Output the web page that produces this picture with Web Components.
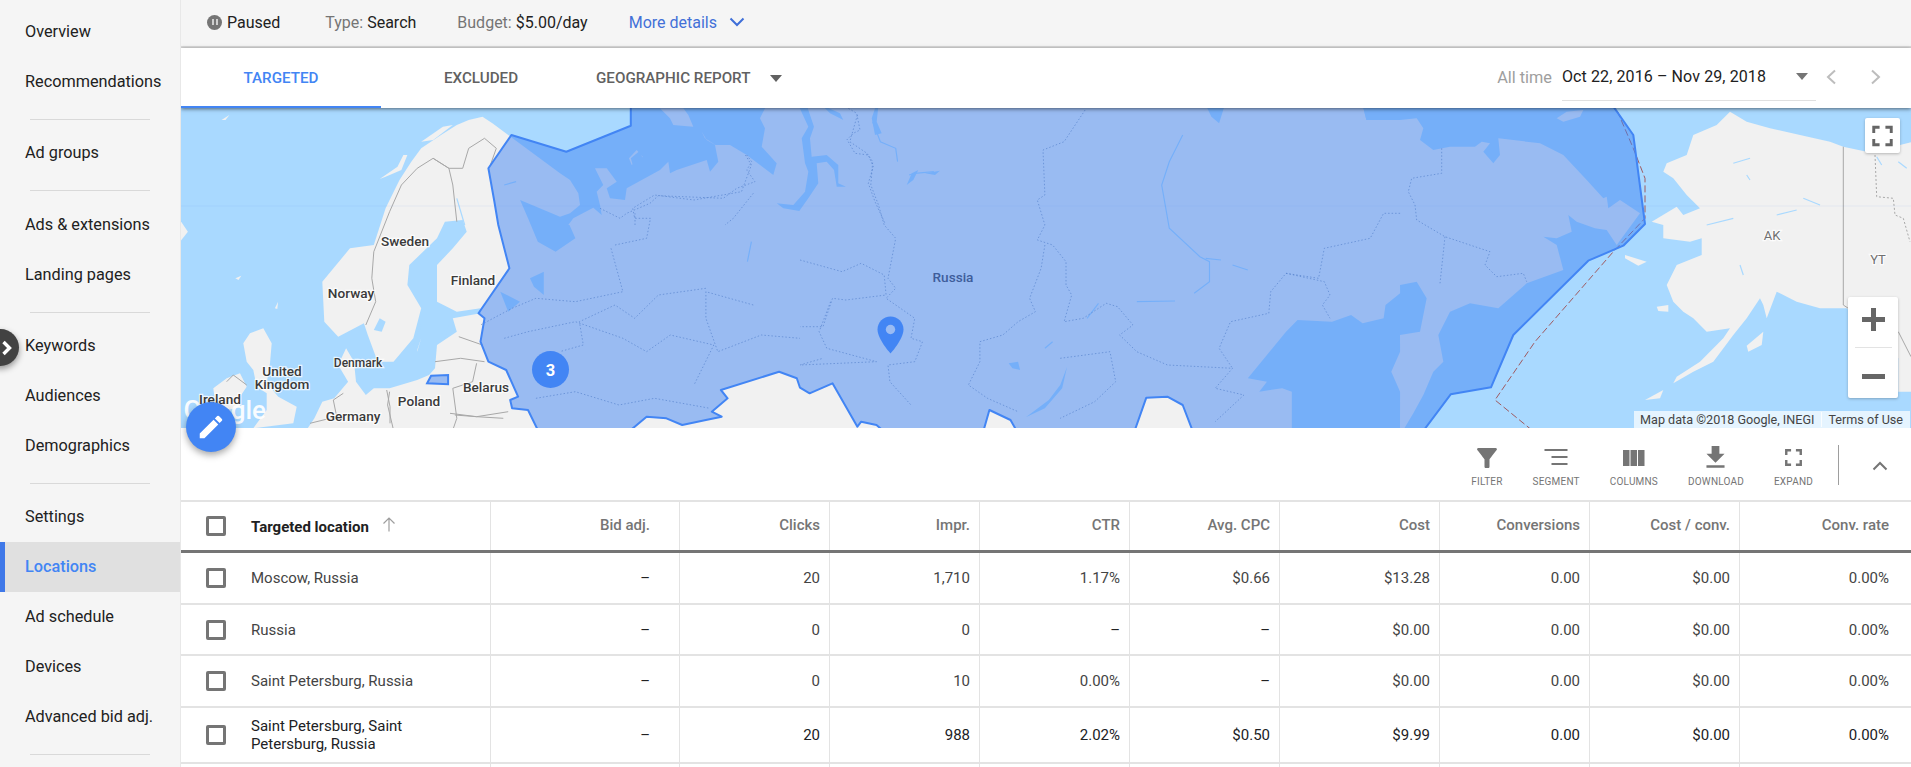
<!DOCTYPE html>
<html>
<head>
<meta charset="utf-8">
<title>Locations</title>
<style>
	html, body { margin: 0; height: 767px; overflow: hidden; background: #fff; }
	body { display: flex; font-family: Roboto, "Liberation Sans", sans-serif; color: #212121; }
</style>
</head>
<body>
<side-nav>
	<nav-item>Overview</nav-item>
	<nav-item>Recommendations</nav-item>
	<nav-rule></nav-rule>
	<nav-item>Ad groups</nav-item>
	<nav-rule></nav-rule>
	<nav-item>Ads &amp; extensions</nav-item>
	<nav-item>Landing pages</nav-item>
	<nav-rule></nav-rule>
	<nav-item>Keywords</nav-item>
	<nav-item>Audiences</nav-item>
	<nav-item>Demographics</nav-item>
	<nav-rule></nav-rule>
	<nav-item>Settings</nav-item>
	<nav-item active>Locations</nav-item>
	<nav-item>Ad schedule</nav-item>
	<nav-item>Devices</nav-item>
	<nav-item>Advanced bid adj.</nav-item>
	<nav-rule></nav-rule>
</side-nav>
<main-pane>
	<status-bar></status-bar>
	<tab-bar>
		<tab-item active>Targeted</tab-item>
		<tab-item>Excluded</tab-item>
		<tab-menu>Geographic report</tab-menu>
		<date-range slot="end"></date-range>
	</tab-bar>
	<geo-map></geo-map>
	<table-toolbar>
		<tool-button label="Filter" icon="filter"></tool-button>
		<tool-button label="Segment" icon="segment"></tool-button>
		<tool-button label="Columns" icon="columns"></tool-button>
		<tool-button label="Download" icon="download"></tool-button>
		<tool-button label="Expand" icon="expand"></tool-button>
	</table-toolbar>
	<data-table></data-table>
	<edit-fab></edit-fab>
</main-pane>
<script>
customElements.define('side-nav', class extends HTMLElement
{
	connectedCallback()
	{
		this.attachShadow({ mode: 'open' }).innerHTML = `
			<style>
				:host { display: block; position: relative; flex: 0 0 181px; width: 181px; height: 767px; padding-top: 7px; box-sizing: border-box; background: #f5f5f5; border-right: 1px solid #e8e8e8; overflow: hidden; }
				.toggle { position: absolute; left: -18px; top: 329px; width: 37px; height: 37px; border-radius: 50%; background: #424242; box-shadow: 0 3px 6px rgba(0,0,0,.4); display: flex; align-items: center; justify-content: flex-end; }
				svg { margin-right: 6px; }
			</style>
			<slot></slot>
			<div class="toggle"><svg width="12" height="16" viewBox="0 0 12 16"><path d="M2.5 2l6 6-6 6" fill="none" stroke="#fff" stroke-width="3.4"/></svg></div>
		`;
	}
});

customElements.define('nav-item', class extends HTMLElement
{
	connectedCallback()
	{
		this.attachShadow({ mode: 'open' }).innerHTML = `
			<style>
				:host { display: block; height: 50px; line-height: 50px; padding-left: 25px; font-size: 16.25px; color: #212121; white-space: nowrap; }
				:host([active]) { padding-left: 20px; border-left: 5px solid #3f78e8; background: #e0e0e0; color: #4285f4; font-weight: 500; }
			</style>
			<slot></slot>
		`;
	}
});

customElements.define('nav-rule', class extends HTMLElement
{
	connectedCallback()
	{
		this.attachShadow({ mode: 'open' }).innerHTML = `
			<style>
				:host { display: block; height: 1px; margin: 12px 30px 8.3px; background: #d9d9d9; }
			</style>
		`;
	}
});

customElements.define('main-pane', class extends HTMLElement
{
	connectedCallback()
	{
		this.attachShadow({ mode: 'open' }).innerHTML = `
			<style>
				:host { display: flex; flex-direction: column; position: relative; flex: 1; min-width: 0; height: 767px; overflow: hidden; }
			</style>
			<slot></slot>
		`;
	}
});

customElements.define('status-bar', class extends HTMLElement
{
	connectedCallback()
	{
		this.attachShadow({ mode: 'open' }).innerHTML = `
			<style>
				:host { display: flex; align-items: center; flex: 0 0 48px; height: 48px; padding: 0 0 2px 26px; box-sizing: border-box; background: #f5f5f5; border-bottom: 2px solid #dcdcdc; font-size: 16px; color: #212121; white-space: nowrap; }
				.dot { width: 15px; height: 15px; border-radius: 50%; background: #757575; display: flex; align-items: center; justify-content: center; gap: 2px; margin-right: 5px; }
				.dot i { width: 2px; height: 6px; background: #cfcfcf; }
				.muted { color: #757575; }
				.type { margin-left: 45px; }
				.budget { margin-left: 41px; }
				.more { margin-left: 41px; color: #4270d8; }
				svg { margin-left: 12px; }
			</style>
			<span class="dot"><i></i><i></i></span><span>Paused</span>
			<span class="type"><span class="muted">Type:</span> Search</span>
			<span class="budget"><span class="muted">Budget:</span> $5.00/day</span>
			<span class="more">More details</span>
			<svg width="16" height="10" viewBox="0 0 16 10"><path d="M1.5 1.5L8 8l6.500-6.500" fill="none" stroke="#3f6fd8" stroke-width="2"/></svg>
		`;
	}
});

customElements.define('tab-bar', class extends HTMLElement
{
	connectedCallback()
	{
		this.attachShadow({ mode: 'open' }).innerHTML = `
			<style>
				:host { display: flex; position: relative; z-index: 2; flex: 0 0 60px; height: 60px; background: #fff; box-shadow: 0 1px 4px rgba(0,0,0,.55); }
				.end { margin-left: auto; display: flex; }
			</style>
			<slot></slot>
			<div class="end"><slot name="end"></slot></div>
		`;
	}
});

customElements.define('tab-item', class extends HTMLElement
{
	connectedCallback()
	{
		this.attachShadow({ mode: 'open' }).innerHTML = `
			<style>
				:host { display: flex; align-items: center; justify-content: center; width: 200px; height: 60px; padding-top: 2px; box-sizing: border-box; border-bottom: 2px solid transparent; font-size: 15.2px; font-weight: 500; text-transform: uppercase; color: #616161; }
				:host([active]) { color: #4285f4; border-bottom-color: #4285f4; }
			</style>
			<slot></slot>
		`;
	}
});

customElements.define('tab-menu', class extends HTMLElement
{
	connectedCallback()
	{
		this.attachShadow({ mode: 'open' }).innerHTML = `
			<style>
				:host { display: flex; align-items: center; height: 60px; padding-left: 15px; box-sizing: border-box; font-size: 15.2px; font-weight: 500; text-transform: uppercase; color: #616161; }
				i { margin-left: 20px; border: 6px solid transparent; border-top: 7px solid #616161; border-bottom: 0; }
			</style>
			<slot></slot><i></i>
		`;
	}
});

customElements.define('date-range', class extends HTMLElement
{
	connectedCallback()
	{
		this.attachShadow({ mode: 'open' }).innerHTML = `
			<style>
				:host { display: flex; align-items: center; height: 58px; padding-right: 30px; font-size: 16px; white-space: nowrap; }
				.label { color: #9e9e9e; margin-right: 10px; font-size: 16.3px; }
				.box { display: flex; align-items: center; justify-content: space-between; width: 254px; height: 38px; margin-top: 10px; padding-bottom: 10px; box-sizing: border-box; border-bottom: 1px solid #e0e0e0; letter-spacing: .1px; color: #212121; }
				.box i { margin-right: 8px; border: 6.500px solid transparent; border-top: 7px solid #757575; border-bottom: 0; }
				svg { margin-left: 10px; }
				svg + svg { margin-left: 35px; }
			</style>
			<span class="label">All time</span>
			<div class="box"><span>Oct 22, 2016 – Nov 29, 2018</span><i></i></div>
			<svg width="10" height="16" viewBox="0 0 10 16"><path d="M9 1.500L2 8l7 6.500" fill="none" stroke="#bdbdbd" stroke-width="2"/></svg>
			<svg width="10" height="16" viewBox="0 0 10 16"><path d="M1 1.500L8 8l-7 6.500" fill="none" stroke="#bdbdbd" stroke-width="2"/></svg>
		`;
	}
});

// coordinates below are read from crops of the map, each with its own origin and x scale
const mapFrames = { a: [180, 2.529], b: [800, 2.613], c: [1400, 3], d: [560, 3], e: [0, 3, 300] };

function mapPoints(source)
{
	return source.trim().split(/\s*\|\s*/).map(part =>
	{
		const [key, ...pairs] = part.trim().split(/\s+/);
		const [left, scale, top = 105] = mapFrames[key];

		return pairs.map(pair =>
		{
			const [x, y] = pair.split(',').map(Number);
			return `${(left + x / scale).toFixed(1)},${(top + y / 3).toFixed(1)}`;
		}).join(' ');
	}).join(' ');
}

const landShapes = [
	// Eurasia, clockwise from the North Cape
	`a 700,60 730,45 765,35 790,55 830,90 | d 0,205 30,225 55,265 60,300 30,325 0,335 | a 940,325 860,285 880,340 905,410 950,440 1000,400 985,360 | d 25,360 40,340 100,308 125,330 120,300 110,260 130,240 105,190 140,190 170,230 140,250 150,280 195,285 200,250 300,195 325,170 330,205 350,195 440,165 450,200 475,170 465,120 510,120 560,150 640,210 650,175 605,125 615,70 600,40 620,0 |
	 b 1470,0 1480,45 1568,45 | c 50,40 70,70 60,105 100,135 150,125 225,125 245,110 270,115 250,140 280,175 300,150 295,100 420,115 490,150 560,225 610,280 620,275 625,310 660,285 720,325 650,420 620,375 585,370 530,350 505,330 515,380 470,400 430,395 470,420 490,495 380,535 295,610 210,595 150,620 115,690 130,770 100,800 70,870 40,925 10,975 0,975 |
	 b 1568,860 1545,800 1568,740 | c 0,690 60,680 80,580 50,530 0,540 | b 1568,565 1530,600 1525,640 1470,655 1440,630 1390,650 1300,645 1270,680 1220,750 1170,820 1220,830 1200,860 1260,850 1285,860 1285,975 |
	 a 320,975 340,940 360,890 390,880 425,830 400,780 420,730 440,770 445,830 470,870 490,850 530,850 600,825 630,810 645,790 650,720 700,680 690,640 760,625 760,610 700,620 650,590 650,480 690,430 725,380 715,345 670,350 650,400 580,480 575,540 610,610 590,700 540,770 500,770 475,690 465,655 400,695 365,650 360,530 430,430 490,420 520,310 555,225 585,170 610,130 660,90`,
	// Alaska and Canada
	`c 990,20 1040,50 1110,70 1200,90 1290,110 1330,125 1400,140 1500,120 1540,110 1540,860 1495,860 1495,760 1400,660 1340,610 1260,610 1190,590 1130,560 1100,640 1090,600 1080,580 1040,640 1000,690 940,770 880,800 820,835 830,815 900,770 970,700 990,670 920,680 880,640 850,620 820,590 800,540 830,480 905,450 905,400 870,410 790,400 790,360 755,350 830,305 850,330 900,310 860,270 820,220 790,200 800,175 860,150 880,90 950,60`,
	`c 675,450 740,470 715,482 675,460`,
	`c 1040,722 1090,680 1085,720 1045,740`,
	`c 770,605 805,600 805,620 775,618`,
	`c 735,885 790,855 780,880`,
	`e 790,85 815,130 810,190 800,250 835,290 890,320 880,370 760,385 800,330 800,280 770,260 760,210 740,185 730,130 750,100`,
	`e 680,235 720,220 740,260 720,290 720,320 650,340 640,265`,
	`a 0,345 20,380 0,410`,
	`a 505,222 550,185 565,150 575,150 560,195 520,215`,
	`a 610,110 665,65 690,60 640,105`,
	`a 105,45 125,30 115,45`,
	`a 140,520 155,512 148,525`,
	`a 240,610 248,590 246,612`,
	`d 300,10 330,40 340,60 400,65 385,30 370,10`,
	`d 425,80 435,100 470,122 440,105`,
	`d 207,160 230,135 248,155 215,180`,
	`c 470,40 500,20 550,15 540,35 490,50`,
	`a 600,735 610,700 600,740`
];

const waterShapes = [
	// Gulf of Ob and the Yenisei mouth
	`d 715,0 740,0 762,65 750,100 755,155 800,150 835,180 835,235 858,245 830,245 822,195 800,170 770,175 775,235 745,280 718,318 670,310 650,295 700,300 735,260 745,200 735,175 725,100 745,65`,
	`d 785,0 840,25 850,45 810,25`,
	`d 935,40 945,10 955,5 950,50 965,85 945,90`,
	`d 1040,240 1055,205 1075,195 1060,225`,
	`d 1095,205 1140,197 1125,210`,
	`b 1060,0 1110,0 1095,55 1075,35`,
	`b 1480,45 1568,20 1568,0 1470,0`,
	// lakes
	`a 1140,160 1165,135 1170,165 1145,180`,
	`a 885,520 920,500 920,570 895,545`,
	`a 810,560 860,590 830,620`,
	`a 505,640 520,650 510,680 490,675`,
	`a 660,690 680,660 670,700`,
	// Baikal
	`b 698,785 685,850 640,910 590,937 650,885 680,840`,
	`b 545,775 570,770 575,795 555,790`
];

const riverLines = [
	`b 1000,90 965,170 945,240 965,370 1045,455 1070,470 1070,530 1030,565`,
	`b 190,50 210,110 250,130 255,170`, `b 285,210 300,205 350,200`, `b 880,590 980,588`,
	`b 780,595 750,640`, `b 1060,460 1100,465`, `b 1130,480 1170,495`, `b 660,710 640,730`,
	`a 700,280 720,360`, `a 820,240 850,230`, `a 610,660 590,720`, `a 1445,410 1435,470`,
	`c 1000,175 1050,160`, `c 920,360 1000,340`, `c 1130,330 1190,315`, `c 1210,280 1260,300`,
	`c 1040,210 1050,225`, `c 1430,155 1445,180`, `c 1495,170 1520,190`, `c 1020,480 1030,510`
];

const dottedLines = [
	`d 120,310 180,340 200,325 270,295 295,272 490,280 530,250 585,230 560,195 575,170 560,150`,
	`d 225,360 225,325`, `d 860,105 880,85 900,75 890,25 865,10`,
	`d 865,110 885,145 925,150 940,185 925,235 945,290 975,355`,
	`d 580,265 520,340 495,360`,
	`a 1100,420 1180,400 1190,340 1150,340 1145,310 1200,270 1300,285 1420,260 1445,180 1430,150`,
	`a 1090,430 1120,560 1000,590 900,580 840,610 760,660`,
	`a 1330,550 1210,570 1150,640 1100,600 1010,650 1020,720 960,740`,
	`a 1450,600 1330,560 1330,640 1360,740 1470,690 1568,700`,
	`a 820,700 880,680 1000,650 | a 1120,700 1180,740 1240,690 1350,720 1300,840`,
	`a 900,880 1000,860 1110,900 1200,880 1340,910`,
	`b 150,30 130,110 175,145 190,170 185,240 205,300 220,360 250,400 230,520 250,550 225,580 300,640 290,700 320,710 300,770 230,780 235,830 290,900`,
	`b 0,465 110,500 160,475 220,510 225,570 120,585 85,580 60,665 0,665`,
	`b 80,590 50,680 70,730 200,770 | b 0,780 60,760`,
	`b 745,15 690,110 635,135 640,270 620,285 640,360 620,405 660,420 695,470 695,540 710,570 690,650 740,640 800,595 830,605 870,660 835,690 880,740 960,780 1130,790 1085,850 1160,870 1085,950`,
	`b 640,420 630,490 600,580 615,620 570,650 530,690 470,710 470,770 440,840 490,880 570,920`,
	`b 680,760 810,740 825,830 770,890 680,940`,
	`b 1568,325 1525,325 1490,400 1370,430 1355,520 1270,505 1230,560 1225,625 1125,650 1095,730 1130,790`,
	`b 1270,505 1370,530 1385,570 1365,600 1385,640`,
	`c 125,130 125,205 35,220 25,260 45,300 50,345 135,395 270,440 255,480 290,515 370,505 380,530`,
	`c 135,395 120,535`
];

const borderLines = [
	`a 640,160 600,190 560,240 530,320 490,440 485,520 495,590 470,660`,
	`a 640,160 680,190 690,240 700,350`, `a 730,130 770,100 800,130 785,180`, `a 640,160 680,190 715,190 730,130`,
	`a 645,770 710,760 770,770`, `a 705,695 765,720`, `a 750,775 740,830 690,850 700,940 690,975`,
	`a 530,860 525,900 540,975`, `a 695,930 750,935 830,920`, `e 1350,340 1430,350 1510,355`, `e 1160,270 1170,320 1170,370`,
	`e 1030,280 1000,300 1010,350 930,370`,
	`e 680,245 700,225 740,255`,
	`c 1330,125 1330,600 1345,610`,
	`c 1495,680 1533,755`
];

const canadaLines = [`c 1425,150 1430,275 1480,280 1485,330 1510,340 1530,410`];

const mapLabels = [
	['Sweden', 405, 242], ['Finland', 473, 281], ['Norway', 351, 294], ['United', 282, 372], ['Kingdom', 282, 385],
	['Denmark', 358, 364, 'small'], ['Ireland', 220, 400], ['Poland', 419, 402], ['Belarus', 486, 388], ['Germany', 353, 417],
	['Russia', 953, 278, 'russia'], ['AK', 1772, 237, 'state'], ['YT', 1878, 261, 'state']
];

customElements.define('geo-map', class extends HTMLElement
{
	connectedCallback()
	{
		const polys = (list, attrs) => list.map(points => `<polygon points="${mapPoints(points)}" ${attrs}/>`).join('');
		const lines = (list, attrs) => list.map(points => `<polyline points="${mapPoints(points)}" fill="none" ${attrs}/>`).join('');
		const russia = mapPoints(`
			a 1140,-10 1140,62 977,140 838,90 780,190 795,290 805,360 833,490 755,625 770,640 760,710 780,770 825,795 855,875 835,885 840,910 880,915 905,975 1140,975 1180,935 1230,940 1270,960 1330,945 1370,935 1345,920 1385,880 1368,855 1515,800 1560,820 1568,848 |
			b 25,865 85,835 150,965 160,950 200,960 215,975 480,975 495,915 550,945 565,975 875,975 905,878 960,875 1000,900 1025,975 |
			c 72,975 152,868 273,847 340,690 565,467 670,422 735,357 700,90 630,-10`);

		this.attachShadow({ mode: 'open' }).innerHTML = `
			<style>
				:host { display: block; position: relative; flex: 0 0 320px; height: 320px; overflow: hidden; background: #a9d9ff; }
				svg.map { display: block; }
				text { font-family: Roboto, "Liberation Sans", sans-serif; }
				.label { font-size: 13.600px; font-weight: 500; fill: #3a3a3a; text-anchor: middle; dominant-baseline: middle; paint-order: stroke; stroke: rgba(255,255,255,.75); stroke-width: 2.500px; }
				.small { font-size: 12px; }
				.russia { fill: #3e5d9b; stroke: none; font-size: 13.600px; }
				.state { fill: #707070; font-weight: 400; font-size: 13px; }
				.google { font-size: 26px; font-weight: 500; fill: #fff; opacity: .92; text-anchor: end; }
				.control { position: absolute; background: #fff; border-radius: 2px; box-shadow: 0 1px 3px rgba(0,0,0,.25); }
				.full { left: 1684px; top: 10px; width: 35px; height: 35px; display: flex; align-items: center; justify-content: center; }
				.zoom { left: 1667px; top: 189px; width: 50px; height: 101px; display: flex; flex-direction: column; align-items: center; }
				.zoom .plus, .zoom .minus { flex: 1; display: flex; align-items: center; justify-content: center; width: 100%; }
				.zoom .plus svg { margin-bottom: 6px; }
				.zoom .minus svg { margin-top: 6px; }
				.zoom hr { width: 37px; height: 1px; margin: 0; border: 0; background: #e3e3e3; }
				.legal { position: absolute; right: 1px; bottom: 0; height: 17px; display: flex; align-items: center; background: rgba(255,255,255,.7); font-size: 12.600px; color: #444; white-space: nowrap; }
				.legal span { padding: 0 7px 0 6px; }
				.legal span + span { border-left: 1px solid rgba(255,255,255,.8); }
			</style>
			<svg class="map" width="1730" height="320" viewBox="181 108 1730 320">
				${polys(landShapes, 'fill="#f1f1f1"')}
				${polys(waterShapes, 'fill="#a9d9ff"')}
				${lines(riverLines, 'stroke="#a9d9ff" stroke-width="1.200"')}
				<polyline points="${mapPoints('c 640,-10 700,130 735,220 735,340 640,440 405,710 285,885 395,975')}" fill="none" stroke="#a05a5f" stroke-width="1" stroke-dasharray="7 3"/>
				${lines(borderLines, 'stroke="#a8a8a8" stroke-width="1"')}
				${lines(canadaLines, 'stroke="#a8a8a8" stroke-width="1" stroke-dasharray="2 2"')}
				${lines(dottedLines, 'stroke="#5f769f" stroke-width=".9" stroke-dasharray="1.500 2" opacity=".7"')}
				<line x1="181" x2="1911" y1="206" y2="206" stroke="#4285f4" stroke-opacity=".07"/>
				<polygon points="${russia}" fill="#4285f4" fill-opacity=".5" stroke="#4285f4" stroke-width="2" stroke-linejoin="round"/>
				<polygon points="${mapPoints('a 625,835 635,812 678,810 678,838')}" fill="#4285f4" fill-opacity=".5" stroke="#4285f4" stroke-width="2"/>
				<text class="google" x="266" y="419">Google</text>
				${mapLabels.map(([name, x, y, kind]) => `<text class="label ${kind || ''}" x="${x}" y="${y}">${name}</text>`).join('')}
				<circle cx="550.500" cy="369.500" r="18.500" fill="#4285f4"/>
				<text x="550.500" y="375.500" text-anchor="middle" font-size="16.500" font-weight="700" fill="#fff">3</text>
				<path d="M890.500 316.500c-7.200 0-13 5.800-13 13 0 9.700 13 24 13 24s13-14.300 13-24c0-7.200-5.800-13-13-13z" fill="#4285f4"/>
				<circle cx="890.500" cy="329.500" r="4.700" fill="#9abbf3"/>
			</svg>
			<div class="control full">
				<svg width="36" height="36" viewBox="0 0 24 24"><path d="M7 14H5v5h5v-2H7v-3zm-2-4h2V7h3V5H5v5zm12 7h-3v2h5v-5h-2v3zM14 5v2h3v3h2V5h-5z" fill="#666"/></svg>
			</div>
			<div class="control zoom">
				<div class="plus"><svg width="23" height="23" viewBox="0 0 23 23"><path d="M9 0h5v9h9v5h-9v9H9v-9H0V9h9z" fill="#666"/></svg></div>
				<hr>
				<div class="minus"><svg width="23" height="5" viewBox="0 0 23 5"><path d="M0 0h23v5H0z" fill="#666"/></svg></div>
			</div>
			<div class="legal"><span>Map data ©2018 Google, INEGI</span><span>Terms of Use</span></div>
		`;
	}
});

customElements.define('table-toolbar', class extends HTMLElement
{
	connectedCallback()
	{
		this.attachShadow({ mode: 'open' }).innerHTML = `
			<style>
				:host { display: flex; justify-content: flex-end; align-items: flex-start; gap: 30px; flex: 0 0 72px; height: 72px; padding-right: 23px; box-sizing: border-box; background: #fff; }
				.rule { width: 1px; height: 40px; margin: 17px 0 0 -5px; background: #9e9e9e; }
				svg { margin: 33px 0 0 3px; }
			</style>
			<slot></slot>
			<div class="rule"></div>
			<svg width="16" height="10" viewBox="0 0 16 10"><path d="M1.500 8.500L8 2l6.500 6.500" fill="none" stroke="#757575" stroke-width="2"/></svg>
		`;
	}
});

const toolIcons = {
	filter: '<svg width="30" height="30" viewBox="0 0 24 24"><path d="M4.250 5.610C6.270 8.200 10 13 10 13v6c0 .55.45 1 1 1h2c.55 0 1-.45 1-1v-6s3.720-4.800 5.740-7.390c.51-.66.04-1.610-.79-1.610H5.040c-.83 0-1.300.95-.79 1.610z" fill="#757575"/></svg>',
	segment: '<svg width="30" height="30" viewBox="0 0 30 30"><path d="M3.500 6h23v2h-23zM10.500 13h16v2h-16zM10.500 20h16v2h-16z" fill="#757575"/></svg>',
	columns: '<svg width="30" height="30" viewBox="0 0 30 30"><path d="M4 7h6.500v16H4zM11.500 7H18v16h-6.500zM19 7h6.500v16H19z" fill="#757575"/></svg>',
	download: '<svg width="31" height="31" viewBox="0 0 24 24"><path d="M19 9h-4V3H9v6H5l7 7 7-7zM5 18v2h14v-2H5z" fill="#757575"/></svg>',
	expand: '<svg width="29" height="29" viewBox="0 0 24 24"><path d="M7 14H5v5h5v-2H7v-3zm-2-4h2V7h3V5H5v5zm12 7h-3v2h5v-5h-2v3zM14 5v2h3v3h2V5h-5z" fill="#757575"/></svg>'
};

customElements.define('tool-button', class extends HTMLElement
{
	connectedCallback()
	{
		this.attachShadow({ mode: 'open' }).innerHTML = `
			<style>
				:host { display: flex; flex-direction: column; align-items: center; height: 72px; padding-top: 11px; box-sizing: border-box; font-size: 10px; letter-spacing: .2px; text-transform: uppercase; color: #757575; }
				.icon { height: 37px; display: flex; align-items: center; }
				svg { display: block; }
			</style>
			<div class="icon">${toolIcons[this.getAttribute('icon')]}</div>
			<div>${this.getAttribute('label')}</div>
		`;
	}
});

customElements.define('check-box', class extends HTMLElement
{
	connectedCallback()
	{
		this.attachShadow({ mode: 'open' }).innerHTML = `
			<style>
				:host { display: block; width: 20px; height: 20px; box-sizing: border-box; border: 3px solid #757575; border-radius: 2px; }
			</style>
		`;
	}
});

const tableColumns = ['Bid adj.', 'Clicks', 'Impr.', 'CTR', 'Avg. CPC', 'Cost', 'Conversions', 'Cost / conv.', 'Conv. rate'];
const tableRows = [
	['Moscow, Russia', '–', '20', '1,710', '1.17%', '$0.66', '$13.28', '0.00', '$0.00', '0.00%'],
	['Russia', '–', '0', '0', '–', '–', '$0.00', '0.00', '$0.00', '0.00%'],
	['Saint Petersburg, Russia', '–', '0', '10', '0.00%', '–', '$0.00', '0.00', '$0.00', '0.00%'],
	['Saint Petersburg, Saint Petersburg, Russia', '–', '20', '988', '2.02%', '$0.50', '$9.99', '0.00', '$0.00', '0.00%']
];

customElements.define('data-table', class extends HTMLElement
{
	connectedCallback()
	{
		const cell = text => `<div class="cell${text === '–' ? ' dash' : ''}">${text}</div>`;
		const rows = tableRows.map((row, index) => `
			<div class="row h${index}">
				<div class="cell first"><check-box></check-box><span class="name">${row[0]}</span></div>
				${row.slice(1).map(cell).join('')}
			</div>`).join('');

		this.attachShadow({ mode: 'open' }).innerHTML = `
			<style>
				:host { display: block; font-size: 15px; color: #444; }
				.row { display: grid; grid-template-columns: 310px 189px 150px 150px 150px 150px 160px 150px 150px 171px; box-sizing: border-box; border-bottom: 2px solid #e3e3e3; }
				.cell { display: flex; align-items: center; justify-content: flex-end; padding-right: 9px; box-sizing: border-box; border-right: 1px solid #e3e3e3; }
				.cell:nth-child(2) { padding-right: 29px; }
				.cell:last-child { padding-right: 22px; border-right: 0; }
				.first { justify-content: flex-start; padding: 0 0 0 25px; }
				.name { width: 170px; margin-left: 25px; line-height: 18px; }
				.dash { color: #222; }
				.head { height: 53px; border-top: 2px solid #e3e3e3; border-bottom: 3px solid #757575; color: #757575; font-weight: 500; }
				.head .cell { padding-bottom: 2px; }
				.head .first { color: #212121; padding-bottom: 0; }
				.head .first .name { width: auto; font-weight: 700; padding-top: 2px; }
				.head svg { margin: 0 0 4px 13px; }
				.h0 { height: 52px; } .h1 { height: 51px; } .h2 { height: 52px; } .h3 { height: 56px; color: #202124; }
				.tail { height: 40px; border: 0; }
			</style>
			<div class="row head">
				<div class="cell first"><check-box></check-box><span class="name">Targeted location</span>
					<svg width="14" height="15" viewBox="0 0 14 15"><path d="M7 14.500V1M1.500 6.500L7 1l5.500 5.500" fill="none" stroke="#9e9e9e" stroke-width="1.200"/></svg>
				</div>
				${tableColumns.map(cell).join('')}
			</div>
			${rows}
			<div class="row tail">${'<div class="cell"></div>'.repeat(10)}</div>
		`;
	}
});

customElements.define('edit-fab', class extends HTMLElement
{
	connectedCallback()
	{
		this.attachShadow({ mode: 'open' }).innerHTML = `
			<style>
				:host { position: absolute; z-index: 3; left: 5px; top: 402px; width: 50px; height: 50px; border-radius: 50%; background: #4285f4; box-shadow: 0 3px 7px rgba(0,0,0,.35); display: flex; align-items: center; justify-content: center; }
			</style>
			<svg width="30" height="30" viewBox="0 0 24 24"><path d="M3 17.250V21h3.750L17.810 9.940l-3.750-3.750L3 17.250zM20.710 7.040a1 1 0 0 0 0-1.410l-2.340-2.340a1 1 0 0 0-1.410 0l-1.830 1.830 3.750 3.750 1.830-1.830z" fill="#fff"/></svg>
		`;
	}
});
</script>
</body>
</html>
